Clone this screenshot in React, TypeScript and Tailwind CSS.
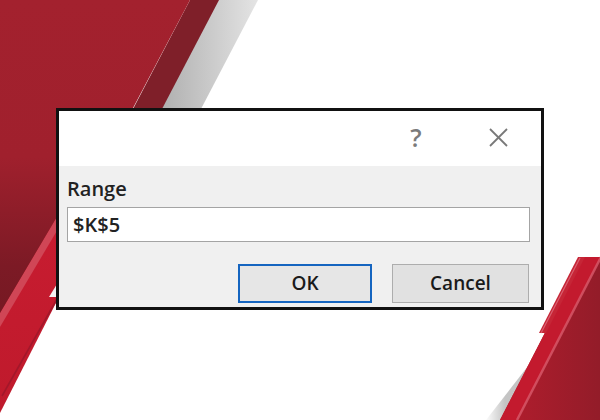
import React from "react";

function Background() {
  return (
    <svg
      className="absolute inset-0"
      width="600"
      height="420"
      viewBox="0 0 600 420"
      xmlns="http://www.w3.org/2000/svg"
    >
      <defs>
        <linearGradient id="gray" gradientUnits="userSpaceOnUse" x1="150" y1="0" x2="258" y2="0">
          <stop offset="0" stopColor="#a9a9a9" />
          <stop offset="1" stopColor="#e4e4e4" />
        </linearGradient>
        <linearGradient id="mainred" gradientUnits="userSpaceOnUse" x1="0" y1="0" x2="0" y2="313">
          <stop offset="0" stopColor="#a3212e" />
          <stop offset="0.5" stopColor="#a0202d" />
          <stop offset="0.85" stopColor="#7c1a25" />
          <stop offset="1" stopColor="#761923" />
        </linearGradient>
        <linearGradient id="brred" gradientUnits="userSpaceOnUse" x1="0" y1="230" x2="0" y2="413">
          <stop offset="0" stopColor="#c71c30" />
          <stop offset="1" stopColor="#bf1a2c" />
        </linearGradient>
        <linearGradient id="rdark" gradientUnits="userSpaceOnUse" x1="510" y1="0" x2="600" y2="0">
          <stop offset="0" stopColor="#b01d2d" />
          <stop offset="1" stopColor="#931c29" />
        </linearGradient>
        <linearGradient id="shadow" gradientUnits="userSpaceOnUse" x1="485" y1="0" x2="505" y2="0">
          <stop offset="0" stopColor="#ffffff" />
          <stop offset="1" stopColor="#c4c4c4" />
        </linearGradient>
      </defs>

      {/* top-left stripes */}
      <polygon points="218,0 258,0 190,130 150,130" fill="url(#gray)" />
      <polygon points="190,0 219,0 151,130 122,130" fill="#7f1f29" />

      {/* lower bright red band */}
      <polygon points="0,300 120,100 120,177 0,413" fill="url(#brred)" />
      <line x1="57" y1="299" x2="2" y2="396" stroke="#a3172a" strokeWidth="1.6" />
      <polygon points="49,297 57,284 57,297" fill="#f4f4f4" />
      {/* light stripe */}
      <polygon points="100,144 100,158 0,327 0,313" fill="#d04656" />
      {/* main red */}
      <polygon points="0,0 190,0 133,108 100,144 0,313" fill="url(#mainred)" />

      {/* bottom-right shape */}
      <polygon points="486,420 501,420 528,366" fill="url(#shadow)" />
      <polygon points="584,257 600,257 600,420 500,420" fill="url(#rdark)" />
      <polygon points="584,257 601,257 517,420 500,420" fill="#c31a2e" />
      <line x1="601" y1="257" x2="517" y2="420" stroke="#d85a6b" strokeWidth="2.5" opacity="0.8" />
      <polygon points="578,257 585,257 546,333 539,333" fill="#c62536" />
      <line x1="580" y1="258" x2="541" y2="333" stroke="#d96070" strokeWidth="1.2" />
    </svg>
  );
}

export default function App() {
  return (
    <div className="relative w-[600px] h-[420px] overflow-hidden bg-white pl-[56px] pt-[108px] font-['Open_Sans',sans-serif]">
      <Background />
      <div className="relative z-10 flex h-[202px] w-[488px] flex-col border-[3px] border-[#111111] bg-[#f0f0f0]">
        {/* title bar */}
        <div className="flex h-[55px] items-center justify-end gap-[67px] bg-white pb-[3px] pr-[33px]">
          <span className="w-[12px] text-center text-[25px] font-semibold leading-none text-[#7b7b7b]">
            ?
          </span>
          <svg width="19" height="19" viewBox="0 0 19 19">
            <line x1="1" y1="1" x2="18" y2="18" stroke="#787878" strokeWidth="1.8" />
            <line x1="18" y1="1" x2="1" y2="18" stroke="#787878" strokeWidth="1.8" />
          </svg>
        </div>
        {/* body */}
        <div className="flex flex-1 flex-col pt-[10px]">
          <div className="ml-[8px] h-[26px] text-[20px] font-semibold leading-[26px] text-[#222222]">
            Range
          </div>
          <div className="ml-[8px] mt-[5px] flex h-[35px] w-[463px] items-center border border-[#a4a4a4] bg-white pl-[5px] text-[20px] font-semibold text-[#222222]">
            $K$5
          </div>
          <div className="mt-[22px] flex justify-end gap-[20px] pr-[12px]">
            <button className="flex h-[39px] w-[134px] items-center justify-center border-2 border-[#1565c0] bg-[#e6e6e6] text-[19px] font-semibold text-[#1a1a1a]">
              OK
            </button>
            <button className="flex h-[39px] w-[137px] items-center justify-center border border-[#adadad] bg-[#e1e1e1] text-[19px] font-semibold text-[#1a1a1a]">
              Cancel
            </button>
          </div>
        </div>
      </div>
    </div>
  );
}
